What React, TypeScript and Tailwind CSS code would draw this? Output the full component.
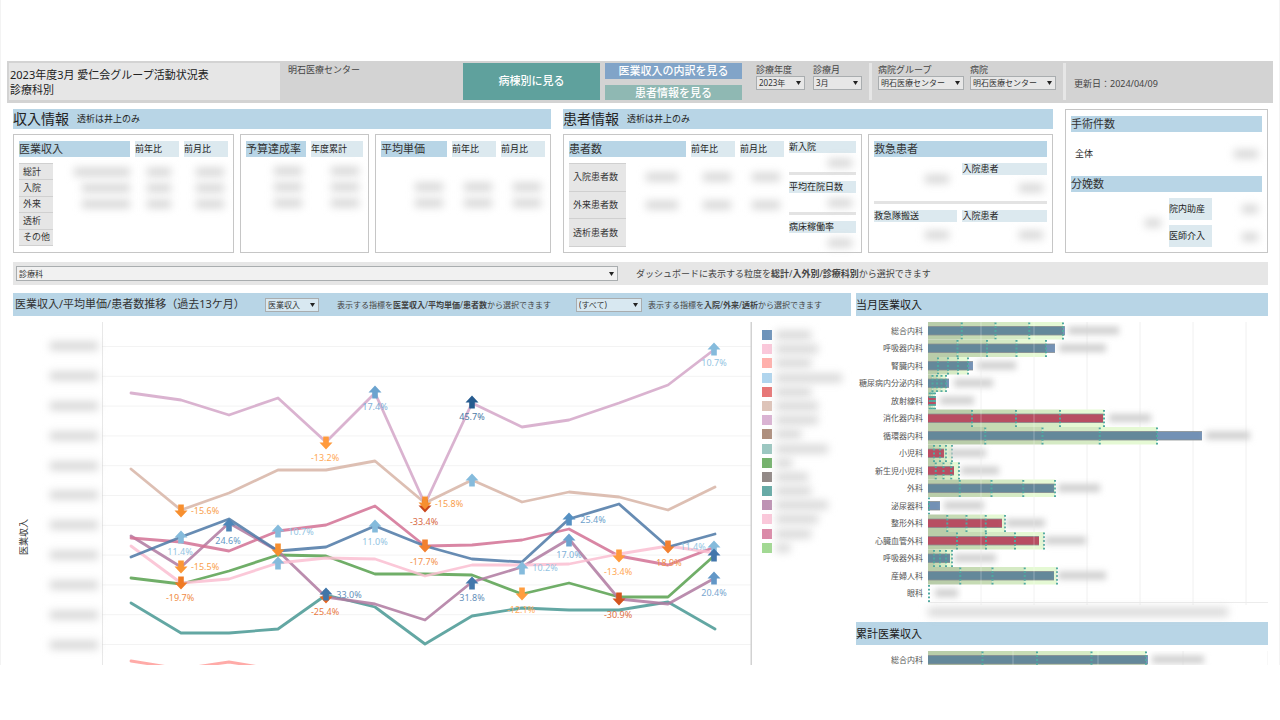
import type { ReactNode } from 'react'
import clsx from 'clsx'

const xs = [29, 79, 127, 176, 224, 273, 323, 370, 420, 467, 517, 566, 613]

const lines = [
  { color: '#ff9d9a', ys: [339, 347, 340, 348] },
  { color: '#499894', ys: [281, 311, 311, 307, 273, 285, 322, 294, 286, 288, 288, 280, 307] },
  { color: '#59a14f', ys: [256, 262, 249, 233, 234, 252, 252, 253, 272, 261, 275, 275, 233] },
  { color: '#b07aa1', ys: [214, 245, 201, 229, 275, 282, 298, 260, 245, 217, 277, 282, 256] },
  { color: '#d37295', ys: [216, 220, 229, 209, 203, 184, 224, 223, 218, 207, 234, 243, 225] },
  { color: '#fabfd2', ys: [224, 261, 257, 241, 236, 237, 254, 243, 243, 242, 232, 224, 231] },
  { color: '#4e79a7', ys: [235, 215, 197, 229, 225, 204, 224, 237, 240, 197, 182, 225, 212] },
  { color: '#d7b5a6', ys: [147, 188, 171, 148, 148, 139, 181, 158, 180, 170, 175, 188, 165] },
  { color: '#d4a6c8', ys: [71, 78, 93, 76, 120, 71, 182, 81, 105, 98, 81, 63, 27] },
]

const arrows = [
  { x: 224, y: 121, up: false, color: '#ff9a3c' },
  { x: 273, y: 70, up: true, color: '#6ba3cf' },
  { x: 370, y: 80, up: true, color: '#265b8f' },
  { x: 612, y: 27, up: true, color: '#85bbdc' },
  { x: 79, y: 189, up: false, color: '#f78f2f' },
  { x: 79, y: 215, up: true, color: '#85bbdc' },
  { x: 79, y: 245, up: false, color: '#fb9634' },
  { x: 79, y: 261, up: false, color: '#ef7a24' },
  { x: 127, y: 203, up: true, color: '#4e86b8' },
  { x: 176, y: 209, up: true, color: '#85bbdc' },
  { x: 176, y: 241, up: true, color: '#85bbdc' },
  { x: 176, y: 228, up: false, color: '#f78f2f' },
  { x: 224, y: 275, up: false, color: '#e8641e' },
  { x: 224, y: 272, up: true, color: '#3f75a8' },
  { x: 273, y: 204, up: true, color: '#85bbdc' },
  { x: 323, y: 184, up: false, color: '#c8451c' },
  { x: 323, y: 181, up: false, color: '#f78f2f' },
  { x: 323, y: 224, up: false, color: '#f28030' },
  { x: 370, y: 158, up: true, color: '#85bbdc' },
  { x: 370, y: 261, up: true, color: '#4377ab' },
  { x: 420, y: 246, up: true, color: '#85bbdc' },
  { x: 420, y: 272, up: false, color: '#ff9d3f' },
  { x: 467, y: 197, up: true, color: '#5590c2' },
  { x: 467, y: 218, up: true, color: '#6ba3cf' },
  { x: 517, y: 234, up: false, color: '#ff9a3c' },
  { x: 517, y: 277, up: false, color: '#d4551f' },
  { x: 566, y: 225, up: false, color: '#f28030' },
  { x: 612, y: 225, up: true, color: '#85bbdc' },
  { x: 612, y: 233, up: true, color: '#4377ab' },
  { x: 612, y: 256, up: true, color: '#6297c7' },
]

const marks = [
  { x: 273, y: 88, text: '17.4%', color: '#7fb0d8' },
  { x: 223, y: 139, text: '-13.2%', color: '#ffa754' },
  { x: 370, y: 98, text: '45.7%', color: '#4c79a6' },
  { x: 612, y: 44, text: '10.7%', color: '#94c4e2' },
  { x: 103, y: 192, text: '-15.6%', color: '#f9a04c' },
  { x: 78, y: 233, text: '11.4%', color: '#94c4e2' },
  { x: 103, y: 248, text: '-15.5%', color: '#f9a04c' },
  { x: 78, y: 279, text: '-19.7%', color: '#f08c45' },
  { x: 126, y: 222, text: '24.6%', color: '#6497c5' },
  { x: 199, y: 213, text: '10.7%', color: '#94c4e2' },
  { x: 273, y: 223, text: '11.0%', color: '#94c4e2' },
  { x: 322, y: 203, text: '-33.4%', color: '#d7683f' },
  { x: 347, y: 185, text: '-15.8%', color: '#f9a04c' },
  { x: 322, y: 243, text: '-17.7%', color: '#f3924c' },
  { x: 247, y: 276, text: '33.0%', color: '#658fba' },
  { x: 223, y: 293, text: '-25.4%', color: '#e97a3f' },
  { x: 370, y: 279, text: '31.8%', color: '#658fba' },
  { x: 443, y: 249, text: '10.2%', color: '#94c4e2' },
  { x: 419, y: 291, text: '-12.1%', color: '#ffac5a' },
  { x: 491, y: 201, text: '25.4%', color: '#6c9fcb' },
  { x: 467, y: 236, text: '17.0%', color: '#7fb0d8' },
  { x: 516, y: 253, text: '-13.4%', color: '#ffa754' },
  { x: 516, y: 296, text: '-30.9%', color: '#dc7044' },
  { x: 591, y: 228, text: '11.4%', color: '#94c4e2' },
  { x: 567, y: 244, text: '18.9%', color: '#f3924c' },
  { x: 612, y: 274, text: '20.4%', color: '#78a6cf' },
]

const legend = [
  { color: '#6d93ba', width: 35 },
  { color: '#fac8da', width: 42 },
  { color: '#ffb0ac', width: 35 },
  { color: '#b0d5ee', width: 66 },
  { color: '#e77676', width: 35 },
  { color: '#dec4b9', width: 42 },
  { color: '#dab3d3', width: 42 },
  { color: '#ae8f7e', width: 25 },
  { color: '#9cc7c1', width: 52 },
  { color: '#75b26d', width: 16 },
  { color: '#928987', width: 32 },
  { color: '#66aaa6', width: 35 },
  { color: '#be92b4', width: 52 },
  { color: '#fac8da', width: 42 },
  { color: '#db8aa8', width: 35 },
  { color: '#a2d993', width: 14 },
]

type Dept = { name: string; target: number; value: number; smudge: [number, number]; over?: boolean }

const monthly: Dept[] = [
  { name: '総合内科', target: 135, value: 137, smudge: [138, 193] },
  { name: '呼吸器内科', target: 118, value: 127, smudge: [129, 180] },
  { name: '腎臓内科', target: 40, value: 45, smudge: [47, 90] },
  { name: '糖尿病内分泌内科', target: 18, value: 21, smudge: [24, 67] },
  { name: '放射線科', target: 7, value: 8, smudge: [10, 48], over: true },
  { name: '消化器内科', target: 176, value: 175, smudge: [179, 225], over: true },
  { name: '循環器内科', target: 229, value: 274, smudge: [276, 324] },
  { name: '小児科', target: 24, value: 16, smudge: [18, 60], over: true },
  { name: '新生児小児科', target: 31, value: 26, smudge: [31, 73], over: true },
  { name: '外科', target: 127, value: 126, smudge: [128, 174] },
  { name: '泌尿器科', target: 1, value: 12, smudge: [14, 58] },
  { name: '整形外科', target: 77, value: 74, smudge: [76, 119], over: true },
  { name: '心臓血管外科', target: 116, value: 111, smudge: [115, 160], over: true },
  { name: '呼吸器外科', target: 24, value: 22, smudge: [24, 70] },
  { name: '産婦人科', target: 129, value: 126, smudge: [128, 180] },
  { name: '眼科', target: 1, value: 0, smudge: [5, 32] },
]

const total: Dept[] = [
  { name: '総合内科', target: 218, value: 220, smudge: [222, 278] },
]

const shades = ['#b9cda9', '#c6dbb4', '#d5eac4', '#e5f9d4']

const Smudge = ({ className }: { className?: string }) => (
  <span className={clsx('block h-2 bg-neutral-300 blur-[4px]', className)} />
)

const Select = ({ label, value, className }: { label: string; value: string; className?: string }) => (
  <span className={clsx('relative block', className)}>
    <select
      aria-label={label}
      className="block h-full w-full appearance-none border border-[#a9adaf] bg-white/45 pl-[2px] text-[8px] leading-3 text-[#333]"
    >
      <option>{value}</option>
    </select>
    <svg viewBox="0 0 5 4" className="pointer-events-none absolute top-1/2 right-1 h-1 w-[5px] -translate-y-1/2">
      <path d="M0 0H5L2.5 4Z" fill="#222" />
    </svg>
  </span>
)

const Filter = ({ label, value, className }: { label: string; value: string; className?: string }) => (
  <div className={clsx('shrink-0', className)}>
    <div className="text-[9px] leading-[13px] whitespace-nowrap text-[#444]">{label}</div>
    <Select label={label} value={value} className="h-[14px]" />
  </div>
)

const SectionTitle = ({ title }: { title: string }) => (
  <div className="flex h-5 items-center gap-2 bg-[#b8d5e6]">
    <h2 className="text-[14px] leading-5 text-[#222]">{title}</h2>
    <span className="text-[9px] text-[#222]">透析は井上のみ</span>
  </div>
)

const Box = ({ className, children }: { className?: string; children: ReactNode }) => (
  <div className={clsx('border border-[#c6c6c6] px-[5px] pt-[6px]', className)}>{children}</div>
)

const Head = ({ children }: { children: ReactNode }) => (
  <h3 className="h-4 bg-[#b8d5e6] text-[11px] leading-4 whitespace-nowrap text-[#333]">{children}</h3>
)

const Sub = ({ children }: { children: ReactNode }) => (
  <div className="h-4 bg-[#dce9ef] text-[9px] leading-4 whitespace-nowrap text-[#222]">{children}</div>
)

const Tag = ({ children }: { children: ReactNode }) => (
  <div className="h-3 bg-[#dce9ef] text-[9px] leading-3 whitespace-nowrap text-[#222]">{children}</div>
)

const PanelTitle = ({ children }: { children: ReactNode }) => (
  <h2 className="h-[23px] bg-[#b8d5e6] text-[11px] leading-[23px] text-[#222]">{children}</h2>
)

const Header = () => (
  <header className="flex h-[42px] bg-[#d3d3d3] p-[2px]">
    <h1 className="h-[37px] w-[271px] bg-[#e6e6e6] pt-1 pl-px text-[11px] leading-[15px] text-[#222]">
      2023年度3月 愛仁会グループ活動状況表
      <br />
      診療科別
    </h1>
    <div className="flex-1 pl-2 text-[9px] leading-[14px] text-[#444]">明石医療センター</div>
    <button className="h-[37px] w-[137px] bg-[#5fa19d] text-[11px] font-medium text-white">病棟別に見る</button>
    <div className="ml-[5px] flex h-[37px] w-[137px] flex-col justify-between text-[11px] font-medium text-white">
      <button className="h-4 bg-[#81a4c8] leading-4">医業収入の内訳を見る</button>
      <button className="h-[15px] bg-[#8fb8b3] leading-[15px]">患者情報を見る</button>
    </div>
    <Filter label="診療年度" value="2023年" className="ml-[14px] w-[49px]" />
    <Filter label="診療月" value="3月" className="ml-2 w-[49px]" />
    <div className="ml-[7px] h-[37px] w-[3px] bg-[#e6e6e6]" />
    <Filter label="病院グループ" value="明石医療センター" className="ml-[6px] w-[86px]" />
    <Filter label="病院" value="明石医療センター" className="ml-[6px] w-[86px]" />
    <div className="ml-[7px] h-[37px] w-[3px] bg-[#e6e6e6]" />
    <div className="w-[205px] pt-[14px] pl-2 text-[9px] leading-[14px] text-[#444]">更新日：2024/04/09</div>
  </header>
)

const Income = () => (
  <section>
    <SectionTitle title="収入情報" />
    <div className="mt-[5px] grid grid-cols-[221fr_129fr_176fr] gap-[6px]">
      <Box className="h-[119px]">
        <div className="grid grid-cols-[111fr_44fr_44fr] gap-[5px]">
          <Head>医業収入</Head>
          <Sub>前年比</Sub>
          <Sub>前月比</Sub>
        </div>
        <table className="mt-[6px] h-[83px] w-full text-[9px] leading-3 text-[#333]">
          <tbody>
            {['総計', '入院', '外来', '透析', 'その他'].map((name, i) => (
              <tr key={name}>
                <th className="w-[34px] border-y border-[#d0d0d0] bg-[#e6e6e6] pl-1 text-left font-normal whitespace-nowrap">
                  {name}
                </th>
                <td className="w-[77px]">
                  {i < 3 && <Smudge className={clsx('ml-auto', i === 0 ? 'w-14' : 'w-12')} />}
                </td>
                <td className="w-[49px]">{i < 3 && <Smudge className="mr-2 ml-auto w-6" />}</td>
                <td>{i < 3 && <Smudge className="mr-1 ml-auto w-7" />}</td>
              </tr>
            ))}
          </tbody>
        </table>
      </Box>
      <Box>
        <div className="grid grid-cols-[60fr_52fr] gap-[5px]">
          <Head>予算達成率</Head>
          <Sub>年度累計</Sub>
        </div>
        <div className="mt-[10px] grid grid-cols-[60fr_52fr] gap-x-[5px] gap-y-2">
          {[0, 1, 2, 3, 4, 5].map((i) => (
            <Smudge key={i} className="mr-1 ml-auto w-7" />
          ))}
        </div>
      </Box>
      <Box>
        <div className="grid grid-cols-[66fr_44fr_44fr] gap-[5px]">
          <Head>平均単価</Head>
          <Sub>前年比</Sub>
          <Sub>前月比</Sub>
        </div>
        <div className="mt-[26px] grid grid-cols-[66fr_44fr_44fr] gap-x-[5px] gap-y-2">
          {[0, 1, 2, 3, 4, 5].map((i) => (
            <Smudge key={i} className="mr-1 ml-auto w-7" />
          ))}
        </div>
      </Box>
    </div>
  </section>
)

const Patients = () => (
  <section>
    <SectionTitle title="患者情報" />
    <div className="mt-[5px] grid grid-cols-[299fr_185fr] gap-[6px]">
      <Box className="flex h-[119px] gap-[5px]">
        <div className="flex-1">
          <div className="grid grid-cols-[117fr_44fr_44fr] gap-[5px]">
            <Head>患者数</Head>
            <Sub>前年比</Sub>
            <Sub>前月比</Sub>
          </div>
          <table className="mt-[6px] h-[84px] w-full text-[9px] leading-3 text-[#333]">
            <tbody>
              {['入院患者数', '外来患者数', '透析患者数'].map((name, i) => (
                <tr key={name}>
                  <th className="w-[57px] border-y border-[#d0d0d0] bg-[#e6e6e6] pl-1 text-left font-normal whitespace-nowrap">
                    {name}
                  </th>
                  <td className="w-[60px]">{i < 2 && <Smudge className="mr-2 ml-auto w-8" />}</td>
                  <td className="w-[49px]">{i < 2 && <Smudge className="mr-1 ml-auto w-7" />}</td>
                  <td>{i < 2 && <Smudge className="mr-1 ml-auto w-7" />}</td>
                </tr>
              ))}
            </tbody>
          </table>
        </div>
        <div className="w-[67px]">
          {['新入院', '平均在院日数', '病床稼働率'].map((name, i) => (
            <div key={name} className="h-10">
              <Tag>{name}</Tag>
              <Smudge className="mt-[6px] mr-1 ml-auto w-6" />
              {i < 2 && <div className="mt-[5px] h-[3px] bg-[#e3e3e3]" />}
            </div>
          ))}
        </div>
      </Box>
      <Box>
        <Head>救急患者</Head>
        <div className="mt-[6px] grid h-[38px] grid-cols-[83fr_84fr] gap-[5px]">
          <Smudge className="mt-3 mr-2 ml-auto w-6" />
          <div>
            <Tag>入院患者</Tag>
            <Smudge className="mt-[9px] mr-1 ml-auto w-6" />
          </div>
        </div>
        <div className="h-[3px] bg-[#e3e3e3]" />
        <div className="mt-[6px] grid grid-cols-[83fr_84fr] gap-x-[5px] gap-y-[9px]">
          <Tag>救急隊搬送</Tag>
          <Tag>入院患者</Tag>
          <Smudge className="mr-2 ml-auto w-6" />
          <Smudge className="mr-1 ml-auto w-6" />
        </div>
      </Box>
    </div>
  </section>
)

const Operations = () => (
  <Box className="h-36">
    <Head>手術件数</Head>
    <div className="flex h-11 items-center justify-between px-1 text-[9px] text-[#222]">
      全体
      <Smudge className="w-6" />
    </div>
    <Head>分娩数</Head>
    <div className="mt-[6px] flex items-center">
      <div className="flex-1">
        <Smudge className="mr-2 ml-auto w-4" />
      </div>
      <div className="flex w-[43px] flex-col gap-[5px] text-[9px] leading-[22px] whitespace-nowrap text-[#222]">
        <div className="h-[22px] bg-[#dce9ef]">院内助産</div>
        <div className="h-[22px] bg-[#dce9ef]">医師介入</div>
      </div>
      <div className="flex w-[50px] flex-col gap-5 pr-1">
        <Smudge className="ml-auto w-4" />
        <Smudge className="ml-auto w-4" />
      </div>
    </div>
  </Box>
)

const Trend = () => (
  <div className="flex pt-[6px]">
    <div className="flex w-[89px] items-center">
      <div className="mt-[88px] ml-[5px] text-[9px] leading-3 whitespace-nowrap text-[#333] [writing-mode:sideways-lr]">
        医業収入
      </div>
      <div className="ml-auto flex h-[327px] flex-col items-end justify-between self-start pt-5 pr-1">
        {Array.from({ length: 11 }, (_, i) => (
          <Smudge key={i} className="w-12" />
        ))}
      </div>
    </div>
    <svg viewBox="0 0 650 343" className="min-w-0 flex-1">
      {Array.from({ length: 11 }, (_, i) => (
        <path key={i} d={`M0 ${24.5 + i * 29.8}H650`} stroke="#f3f3f3" />
      ))}
      <path d="M-.5 0V343M649.5 0V343" stroke="#d2d2d2" strokeWidth="2" />
      {lines.map((l) => (
        <polyline
          key={l.color}
          points={l.ys.map((y, i) => `${xs[i]},${y}`).join(' ')}
          fill="none"
          stroke={l.color}
          strokeOpacity=".86"
          strokeWidth="2.8"
          strokeLinecap="round"
          strokeLinejoin="round"
        />
      ))}
      {arrows.map((a, i) => (
        <path
          key={i}
          d="M0-6.5L6.5.5H2.8V6.5H-2.8V.5H-6.5Z"
          fill={a.color}
          transform={`translate(${a.x} ${a.y}) rotate(${a.up ? 0 : 180})`}
        />
      ))}
      {marks.map((m, i) => (
        <text key={i} x={m.x} y={m.y} fill={m.color} textAnchor="middle" className="text-[9px]">
          {m.text}
        </text>
      ))}
    </svg>
    <div className="flex h-[231px] w-[99px] flex-col justify-between pt-2 pl-[10px]">
      {legend.map((item, i) => (
        <div key={i} className="flex items-center gap-1">
          <span className="h-[10px] w-[10px]" style={{ background: item.color }} />
          <span className="h-2 bg-neutral-300 blur-[4px]" style={{ width: item.width }} />
        </div>
      ))}
    </div>
  </div>
)

const BarRow = ({ dept, y }: { dept: Dept; y: number }) => {
  const q = dept.target / 4
  return (
    <g transform={`translate(0 ${y})`}>
      {dept.target > 1 &&
        shades.map((c, i) => <rect key={c} x={i * q} width={q} height="17.5" fill={c} />)}
      <rect y="4.5" width={dept.value} height="8.5" fill={dept.over ? '#bd5a6d' : '#7391b5'} />
      <rect
        y="4.5"
        width={Math.min(dept.value, dept.target)}
        height="8.5"
        fill={dept.over ? '#b74e62' : '#64889a'}
      />
      <path d={`M0 4.5H${dept.value}M0 13H${dept.value}`} stroke="#8a8f90" strokeWidth=".8" />
      {(dept.target > 1 ? [1, 2, 3, 4] : [4]).map((i) => (
        <path key={i} d={`M${i * q} .5V17.5`} stroke="#4fa9a0" strokeWidth="2" strokeDasharray="1.8 2" />
      ))}
      <rect
        x={dept.smudge[0] + 2}
        y="4.5"
        width={dept.smudge[1] - dept.smudge[0] - 4}
        height="8"
        fill="#cfcfcf"
        filter="url(#soft)"
      />
    </g>
  )
}

const Bars = ({ data, height, step }: { data: Dept[]; height: number; step: number }) => (
  <div className="flex pt-[6px]">
    <div className="w-[72px] shrink-0 pr-[5px] text-right text-[8px] whitespace-nowrap text-[#555]">
      <div className="flex flex-col justify-around" style={{ height: data.length * 17.5 }}>
        {data.map((d) => (
          <div key={d.name} className="leading-3">
            {d.name}
          </div>
        ))}
      </div>
    </div>
    <svg viewBox={`0 0 340 ${height}`} className="min-w-0 flex-1">
      <defs>
        <filter id="soft" x="-20%" y="-100%" width="140%" height="300%">
          <feGaussianBlur stdDeviation="3" />
        </filter>
      </defs>
      {[1, 2, 3, 4, 5, 6].map((i) => (
        <path key={i} d={`M${i * step} 0V${height}`} stroke="#f0f0f0" />
      ))}
      {data.map((d, i) => (
        <BarRow key={d.name} dept={d} y={i * 17.5} />
      ))}
      {data.length > 1 && <path d="M0 280.5H340" stroke="#ececec" />}
      <path d={`M${step} 0V${height}M${2 * step} 0V${height}`} stroke="#fff" strokeOpacity=".3" />
    </svg>
  </div>
)

const App = () => (
  <main className="h-[665px] overflow-hidden border-x border-[#f3f3f3] bg-white px-[6px] pt-[61px] font-['Noto_Sans','Noto_Sans_CJK_JP',sans-serif]">
    <Header />
    <div className="pr-[5px] pl-[6px]">
      <div className="mt-[6px] grid grid-cols-[538fr_490fr_203fr] gap-3">
        <Income />
        <Patients />
        <Operations />
      </div>

      <div className="mt-[9px] flex h-[23px] items-center bg-[#e6e6e6] px-[3px]">
        <Select label="表示粒度" value="診療科" className="h-[15px] w-[602px]" />
        <p className="ml-[18px] text-[9px] whitespace-nowrap text-[#444]">
          ダッシュボードに表示する粒度を<b>総計</b>/<b>入外別</b>/<b>診療科別</b>から選択できます
        </p>
      </div>

      <div className="mt-2 grid grid-cols-[838fr_412fr] gap-[5px]">
        <section className="min-w-0">
          <div className="flex h-[23px] items-center bg-[#b8d5e6] pl-[2px] text-[8px] whitespace-nowrap text-[#444]">
            <h2 className="w-[250px] text-[11px] text-[#333]">医業収入/平均単価/患者数推移（過去13ケ月）</h2>
            <Select label="指標" value="医業収入" className="h-[14px] w-[54px]" />
            <p className="ml-[18px] w-[239px]">
              表示する指標を<b>医業収入</b>/<b>平均単価</b>/<b>患者数</b>から選択できます
            </p>
            <Select label="区分" value="(すべて)" className="h-[14px] w-[66px]" />
            <p className="ml-[6px]">
              表示する指標を<b>入院</b>/<b>外来</b>/<b>透析</b>から選択できます
            </p>
          </div>
          <Trend />
        </section>

        <section className="min-w-0">
          <PanelTitle>当月医業収入</PanelTitle>
          <Bars data={monthly} height={283} step={53} />
          <Smudge className="mt-[3px] mr-10 mb-[6px] ml-[72px]" />
          <PanelTitle>累計医業収入</PanelTitle>
          <Bars data={total} height={18} step={85} />
        </section>
      </div>
    </div>
  </main>
)

export default App
